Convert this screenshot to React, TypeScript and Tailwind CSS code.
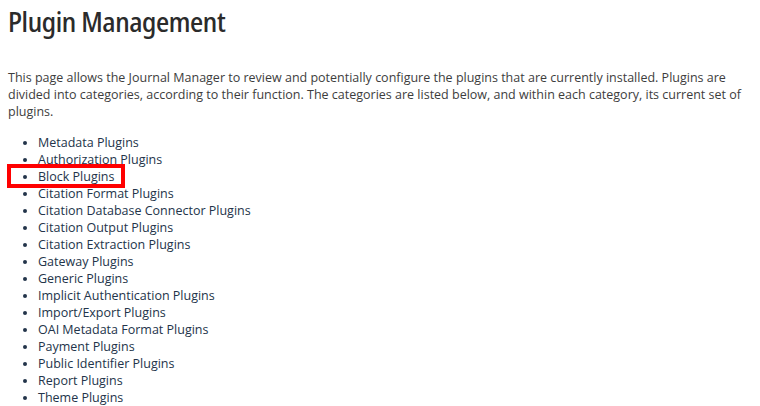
const categories = [
  'Metadata Plugins',
  'Authorization Plugins',
  'Block Plugins',
  'Citation Format Plugins',
  'Citation Database Connector Plugins',
  'Citation Output Plugins',
  'Citation Extraction Plugins',
  'Gateway Plugins',
  'Generic Plugins',
  'Implicit Authentication Plugins',
  'Import/Export Plugins',
  'OAI Metadata Format Plugins',
  'Payment Plugins',
  'Public Identifier Plugins',
  'Report Plugins',
  'Theme Plugins',
]

export default function App() {
  return (
    <div className="w-[760px] h-[406px] overflow-hidden bg-white px-[8px] pt-[4px]">
      <h1 className="text-[26.5px] leading-[36px] font-medium font-stretch-condensed tracking-[-0.4px] text-[#2b2b2b] font-['Noto_Sans_Display','Noto_Sans',sans-serif]">
        Plugin Management
      </h1>
      <p className="mt-[29px] text-[12.5px] leading-[17px] text-[#3d3d3d] font-['Open_Sans',sans-serif]">
        This page allows the Journal Manager to review and potentially configure the plugins that are currently installed. Plugins are divided into categories, according to their function. The categories are listed below, and within each category, its current set of plugins.
      </p>
      <ul className="mt-[14px] list-disc pl-[30px] text-[12.5px] leading-[17px] text-[#23344a] font-['Open_Sans',sans-serif]">
        {categories.map((c) => (
          <li key={c} className="relative">
            {c}
            {c === 'Block Plugins' && (
              <span className="absolute left-[-31px] top-[-4px] w-[118px] h-[24px] border-[4px] border-[#ff0000]" />
            )}
          </li>
        ))}
      </ul>
    </div>
  )
}
